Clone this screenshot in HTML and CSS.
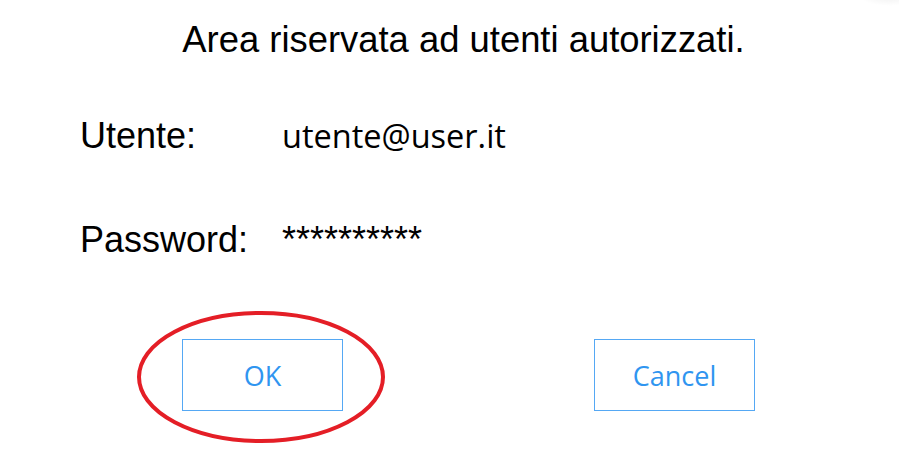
FILE: index.html
```html
<!DOCTYPE html>
<html lang="it">
<head>
<meta charset="utf-8">
<title>Area riservata</title>
<link rel="stylesheet" href="styles.css">
</head>
<body>
<main class="dialog">
  <h1 class="title">Area riservata ad utenti autorizzati.</h1>
  <div class="form">
    <div class="label">Utente:</div>
    <div class="value">utente@user.it</div>
    <div class="label">Password:</div>
    <div class="value secret">**********</div>
  </div>
  <div class="actions">
    <div class="btn-wrap">
      <button class="btn">OK</button>
      <svg class="circle" width="252" height="136" viewBox="0 0 252 136" aria-hidden="true">
        <ellipse cx="126" cy="68" rx="122" ry="64" fill="none" stroke="#e41e26" stroke-width="4"/>
      </svg>
    </div>
    <button class="btn">Cancel</button>
  </div>
</main>
</body>
</html>
```

FILE: styles.css
```css
html, body {
  margin: 0;
  padding: 0;
  background: #ffffff;
}
body {
  position: relative;
  width: 899px;
  height: 465px;
  overflow: hidden;
  font-family: "Liberation Sans", Arial, sans-serif;
  color: #000;
}
body::after {
  content: "";
  position: absolute;
  right: -20px;
  top: -14px;
  width: 60px;
  height: 20px;
  border-radius: 50%;
  background: radial-gradient(ellipse at center, rgba(0,0,0,0.06), rgba(0,0,0,0) 70%);
}
.dialog {
  display: flex;
  flex-direction: column;
  padding-top: 19px;
}
.title {
  margin: 0;
  padding-left: 28px;
  text-align: center;
  font-size: 36.4px;
  font-weight: normal;
  line-height: 41px;
}
.form {
  display: grid;
  grid-template-columns: 202px auto;
  row-gap: 63px;
  align-items: baseline;
  padding-left: 80px;
  margin-top: 55px;
}
.label {
  font-size: 36px;
  line-height: 41px;
}
.value {
  font-family: "Open Sans", "Noto Sans", sans-serif;
  font-size: 32.5px;
  line-height: 41px;
}
.value.secret {
  font-family: "Liberation Sans", Arial, sans-serif;
  font-size: 36px;
}
.actions {
  display: flex;
  gap: 251px;
  padding-left: 182px;
  margin-top: 79px;
}
.btn-wrap {
  position: relative;
  display: flex;
}
.btn {
  width: 161px;
  height: 72px;
  box-sizing: border-box;
  background: #ffffff;
  border: 1px solid #55a8f4;
  color: #2f95f0;
  font-family: "Open Sans", "Noto Sans", sans-serif;
  font-size: 27px;
  padding: 0;
}
.circle {
  position: absolute;
  left: -47px;
  top: -30px;
}
```
